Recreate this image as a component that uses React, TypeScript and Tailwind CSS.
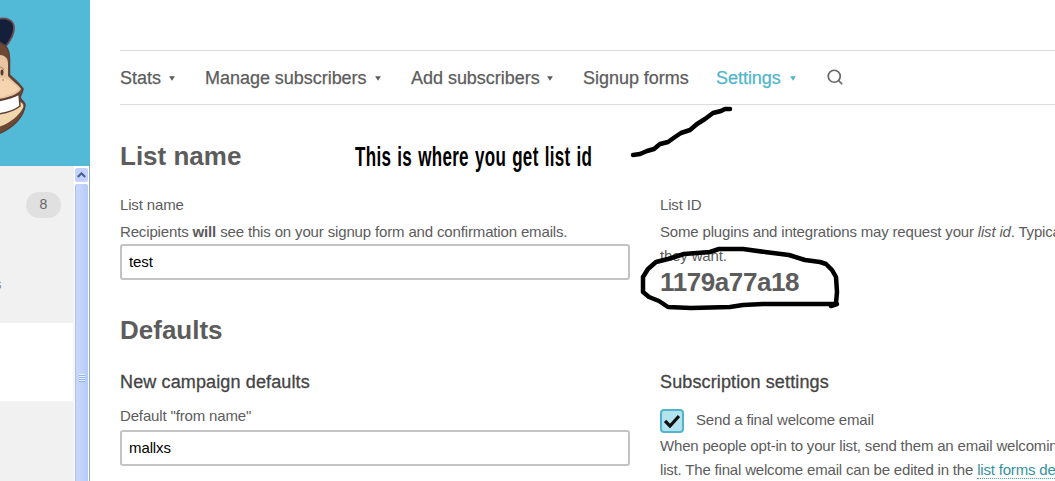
import { Search } from "lucide-react";

function NavItem({ label, className, caret = true }: { label: string; className: string; caret?: boolean }) {
  return (
    <a className={`flex shrink-0 items-center justify-between whitespace-nowrap text-[18px] leading-6 tracking-[-0.03px] [-webkit-text-stroke:0.25px_currentColor] ${className}`}>
      <span>{label}</span>
      {caret && (
        <svg width="6" height="5" viewBox="0 0 6 5" className="mt-[1px]">
          <path d="M.1 .2H5.900L3 4.800Z" fill="currentColor" />
        </svg>
      )}
    </a>
  );
}

function Mascot() {
  return (
    <svg width="30" height="150" viewBox="0 0 30 150" className="block">
      <path d="M-2 19C6 17 14 20 14 28C14 34 10 41 6 46L-2 45Z" fill="#14203a" stroke="#6b4a52" strokeWidth="1.800" />
      <path d="M-2 42C5 44 9.500 49 9.500 58V75C14 79 20 84 23 89C23 92 21 94 20 97C21 101 25 102 25 105C24 117 13 128 -2 134Z" fill="#6d4835" stroke="#5b4038" strokeWidth="1.5" />
      <path d="M-2 55C5 55 8 58 8 64V76C12 81 19 85 21 89C19 94 8 98 -2 99Z" fill="#e9c6a1" />
      <path d="M-2 78C6 77 12 82 19 89C12 94 4 97 -2 98Z" fill="#f5d5b0" />
      <path d="M-2 112C9 111 17 108 20 102C23 103 24 105 23 108C19 116 9 124 -2 127Z" fill="#f1d7ae" />
      <path d="M-2 101C7 99 14 97 19 94L20 106C14 111 6 113 -2 114Z" fill="#fff" stroke="#5b4038" strokeWidth="1.5" />
      <ellipse cx="2" cy="72.500" rx="1.500" ry="3" fill="#573b36" />
      <path d="M-1 67Q2 66 4 70M3 79V81" fill="none" stroke="#a27b62" strokeWidth="1" />
    </svg>
  );
}

function Scrollbar() {
  return (
    <div className="flex w-4 flex-col border-r border-[#8aabb5] bg-white">
      <div className="mt-[2px] flex h-[14px] w-[13px] items-center justify-center self-center rounded-[2px] bg-[#c3d3fd]">
        <svg width="9" height="6" viewBox="0 0 9 6">
          <path d="M.8 5L4.500 1.300L8.200 5" fill="none" stroke="#465f8c" strokeWidth="2" />
        </svg>
      </div>
      <div className="mt-[2px] flex w-[13px] flex-1 flex-col items-center self-center rounded-t-[2px] border-l border-[#a9c0ee] bg-linear-to-r from-[#c8d6fb] via-[#c1d3fb] to-[#b4cafa] pt-[190px]">
        <div className="h-[8px] w-[6px] bg-[repeating-linear-gradient(to_bottom,#eef4fe_0_1px,#8cb0f8_1px_2px)]" />
      </div>
    </div>
  );
}

function Sidebar() {
  return (
    <aside className="flex w-[90px] shrink-0 flex-col">
      <div className="h-[166px] bg-[#52bad6]">
        <Mascot />
      </div>
      <div className="flex flex-1">
        <div className="flex w-[74px] flex-col bg-[#f1f1f1]">
          <div className="relative h-[157px] pt-[26px]">
            <div className="ml-[26px] flex h-[26px] w-[35px] items-center justify-center rounded-full bg-[#e0e0e0] pb-[1px] text-[14px] text-[#666]">8</div>
            <span className="absolute top-[108px] -left-[6px] text-[15px] leading-[20px] text-[#888]">s</span>
          </div>
          <div className="h-[78px] w-[73px] bg-white" />
        </div>
        <Scrollbar />
      </div>
    </aside>
  );
}

function Field({ value }: { value: string }) {
  return (
    <input
      defaultValue={value}
      className="block h-9 w-[510px] rounded-[3px] border-2 border-[#c3c3c3] bg-white px-[7px] pb-[1px] text-[15px] tracking-[-0.1px] text-black outline-none"
    />
  );
}

function Annotations() {
  return (
    <>
      <div className="absolute top-[139px] left-[355px] origin-left scale-x-[0.630] text-[27px] leading-9 font-bold tracking-[0.5px] [word-spacing:1.600px] whitespace-nowrap text-black">
        This is where you get list id
      </div>
      <svg className="pointer-events-none absolute top-0 left-0" width="1055" height="481" viewBox="0 0 1055 481" fill="none" stroke="#000" strokeWidth="4.500" strokeLinecap="round" strokeLinejoin="round">
        <path d="M633 155L640 154L647 151L654 149L660 144L668 142L675 137L681 133L690 130L697 124L705 119L713 113L721 111L725 109L730 109" />
        <path d="M836 303L837 292L836 277L832 270L826 264L820 262L805 260L789 255L765 252L743 249L719 249L710 252L684 254L668 259L656 262L648 269L643 277L643 292L649 297L659 301L668 307L691 308L730 307L743 305L763 304L798 304L837 304L831 306" />
      </svg>
    </>
  );
}

export default function App() {
  return (
    <div className="relative flex h-[481px] w-[1055px] overflow-hidden bg-white font-['Liberation_Sans',sans-serif] text-[15px] text-[#5c5c5c]">
      <Sidebar />
      <main className="ml-[30px] flex w-[935px] shrink-0 flex-col pt-[50px]">
        <nav className="flex h-[55px] shrink-0 items-center border-y border-[#dcdcdc]">
          <NavItem label="Stats" className="mr-[30px] w-[55px]" />
          <NavItem label="Manage subscribers" className="mr-[30px] w-[176px]" />
          <NavItem label="Add subscribers" className="mr-[30px] w-[142px]" />
          <NavItem label="Signup forms" className="mr-[29px] w-[104px]" caret={false} />
          <NavItem label="Settings" className="mr-[30px] w-[80px] text-[#52b5cb]" />
          <Search size={18} strokeWidth={2.300} className="mb-[1px] text-[#666]" />
        </nav>
        <h2 className="mt-[35px] h-8 text-[26px] leading-8 font-bold">List name</h2>
        <div className="mt-[20px] flex h-[122px] shrink-0">
          <section className="w-[540px] shrink-0 leading-6 tracking-[-0.15px]">
            <div className="mt-[1px] h-[27px] whitespace-nowrap">List name</div>
            <p className="h-6 whitespace-nowrap">
              Recipients <b>will</b> see this on your signup form and confirmation emails.
            </p>
            <Field value="test" />
          </section>
          <section className="shrink-0 leading-6 tracking-[-0.175px] whitespace-nowrap">
            <div className="mt-[1px] h-[27px]">List ID</div>
            <p>
              Some plugins and integrations may request your <i>list id</i>. Typically, this is what
              <br />
              they want.
            </p>
            <div className="-mt-[2px] text-[26px] leading-8 font-bold tracking-[-0.4px]">1179a77a18</div>
          </section>
        </div>
        <h2 className="h-8 text-[26px] leading-8 font-bold">Defaults</h2>
        <div className="mt-[24px] flex shrink-0">
          <section className="w-[540px] shrink-0 leading-6 tracking-[-0.15px]">
            <h3 className="h-[34px] text-[18px] tracking-[0.13px] text-[#444] [-webkit-text-stroke:0.3px_currentColor]">New campaign defaults</h3>
            <div className="h-[26px]">Default "from name"</div>
            <Field value="mallxs" />
          </section>
          <section className="shrink-0 leading-6 tracking-[-0.185px] whitespace-nowrap">
            <h3 className="h-[39px] text-[18px] tracking-[0.13px] text-[#444] [-webkit-text-stroke:0.3px_currentColor]">Subscription settings</h3>
            <label className="flex h-[24px] items-center gap-3">
              <span className="flex size-6 items-center justify-center rounded-[4px] border-2 border-[#52b5cb] bg-[#b2e3ee]">
                <svg width="16" height="14" viewBox="0 0 16 14">
                  <path d="M1 7L6 12L15 2" fill="none" stroke="#111" strokeWidth="3.200" />
                </svg>
              </span>
              <span className="pb-[2px]">Send a final welcome email</span>
            </label>
            <p className="mt-[1px]">
              When people opt-in to your list, send them an email welcoming them to your
              <br />
              list. The final welcome email can be edited in the <a className="border-b border-dotted border-[#52a5ad] text-[#35929c]">list forms designer</a>.
            </p>
          </section>
        </div>
      </main>
      <Annotations />
    </div>
  );
}
